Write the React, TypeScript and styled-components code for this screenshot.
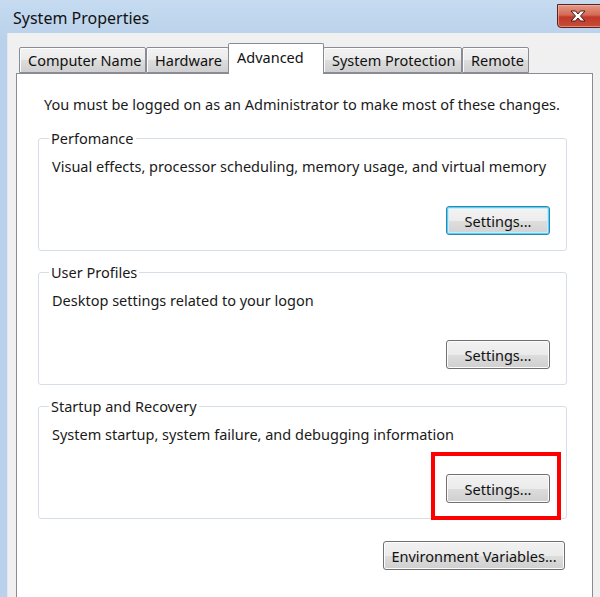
import React from 'react';
import styled, { createGlobalStyle } from 'styled-components';

const Global = createGlobalStyle`
  html, body {
    margin: 0;
    padding: 0;
    background: #b9d1ea;
  }
  body {
    font-family: "Noto Sans", "Open Sans", sans-serif;
    font-size: 14.5px;
    color: #1a1a1a;
  }
`;

const Window = styled.div`
  width: 600px;
  height: 597px;
  overflow: hidden;
  display: flex;
  flex-direction: column;
  background: linear-gradient(180deg, #c6dbf0 0%, #b9d1ea 40px, #b9d1ea 100%);
`;

const TitleBar = styled.div`
  height: 33px;
  flex-shrink: 0;
  display: flex;
  align-items: flex-start;
  justify-content: space-between;
  padding-left: 13px;
`;

const Title = styled.div`
  font-size: 16px;
  line-height: 20px;
  margin-top: 8px;
  color: #111;
`;

const CloseButton = styled.div`
  width: 46px;
  height: 24px;
  margin-top: 4px;
  margin-right: -3px;
  box-sizing: border-box;
  border: 1px solid #5e2020;
  border-radius: 0 0 4px 4px;
  background: linear-gradient(180deg, #e39a87 0%, #d46a55 45%, #c0392b 55%, #c64c35 100%);
  box-shadow: inset 0 0 0 1px rgba(255, 200, 190, 0.5);
  display: flex;
  align-items: center;
  justify-content: center;
  padding-right: 4px;
`;

const Client = styled.div`
  flex: 1;
  margin-left: 7px;
  background: #f0f0f0;
  border-left: 1px solid #dfe8f1;
  padding: 10px 0 0 8px;
  display: flex;
  flex-direction: column;
  min-height: 0;
`;

const TabRow = styled.div`
  display: flex;
  align-items: flex-end;
  padding-left: 3px;
  position: relative;
  z-index: 1;
`;

const Tab = styled.div<{ $w: number; $active?: boolean }>`
  width: ${(p) => p.$w}px;
  box-sizing: border-box;
  height: ${(p) => (p.$active ? 31 : 26)}px;
  margin-bottom: ${(p) => (p.$active ? -1 : 0)}px;
  margin-left: ${(p) => (p.$active ? -1 : 0)}px;
  margin-right: ${(p) => (p.$active ? -1 : 0)}px;
  border: 1px solid #898c95;
  border-bottom: ${(p) => (p.$active ? 'none' : '1px solid #898c95')};
  border-radius: 2px 2px 0 0;
  background: ${(p) =>
    p.$active ? '#ffffff' : 'linear-gradient(180deg, #f2f2f2 0%, #ebebeb 50%, #dddddd 51%, #cfcfcf 100%)'};
  box-shadow: ${(p) => (p.$active ? 'none' : 'inset 0 1px 0 #ffffff, inset 1px 0 0 #fbfbfb')};
  padding-left: 8px;
  line-height: ${(p) => (p.$active ? 26 : 24)}px;
  white-space: nowrap;
  color: #111;
`;

const Panel = styled.div`
  flex: 1;
  width: 577px;
  box-sizing: border-box;
  background: #ffffff;
  border: 1px solid #898c95;
  border-bottom: none;
  padding: 20px 0 0 27px;
  display: flex;
  flex-direction: column;
`;

const Notice = styled.div`
  line-height: 20px;
  white-space: nowrap;
`;

const Group = styled.fieldset`
  margin: 14px 0 0 -6px;
  width: 529px;
  box-sizing: border-box;
  border: 1px solid #d5dfe5;
  border-radius: 3px;
  padding: 8px 16px 15px 13px;
  display: flex;
  flex-direction: column;
  min-width: 0;
  & + & {
    margin-top: 11px;
  }
`;

const Legend = styled.legend`
  padding: 0 2px;
  margin-left: -3px;
  line-height: 20px;
`;

const Description = styled.div`
  line-height: 20px;
  white-space: nowrap;
`;

const ButtonRow = styled.div`
  display: flex;
  justify-content: flex-end;
  margin-top: 30px;
`;

const Button = styled.div<{ $w?: number; $focused?: boolean }>`
  position: relative;
  width: ${(p) => p.$w ?? 104}px;
  height: 29px;
  box-sizing: border-box;
  border: 1px solid ${(p) => (p.$focused ? '#3c7fb1' : '#707070')};
  border-radius: 3px;
  background: ${(p) =>
    p.$focused
      ? 'linear-gradient(180deg, #f4f4f4 0%, #ececec 50%, #dedede 51%, #d2d2d2 100%)'
      : 'linear-gradient(180deg, #f2f2f2 0%, #ebebeb 50%, #dddddd 51%, #cfcfcf 100%)'};
  box-shadow: ${(p) =>
    p.$focused ? 'inset 0 0 0 1px #48d8fb, inset 0 0 0 2px #c8ecfa' : 'inset 0 0 0 1px #fcfcfc'};
  display: flex;
  align-items: center;
  justify-content: center;
  color: #111;
  line-height: 20px;
  white-space: nowrap;
`;

const Highlight = styled.div`
  position: absolute;
  left: -16px;
  top: -23px;
  right: -12px;
  bottom: -18px;
  border: 4px solid #ff0000;
  pointer-events: none;
`;

const FooterRow = styled.div`
  display: flex;
  justify-content: flex-end;
  margin-top: 22px;
  width: 527px;
  margin-left: -6px;
`;

const Close = () => (
  <svg width="20" height="14" viewBox="0 0 20 14">
    <path
      d="M3 2 L7.5 2 L10 5 L12.5 2 L17 2 L12.5 7 L17 12 L12.5 12 L10 9 L7.5 12 L3 12 L7.5 7 Z"
      fill="#ffffff"
      stroke="#4a1a1a"
      strokeWidth="1"
      strokeLinejoin="round"
    />
  </svg>
);

const tabs = [
  { label: 'Computer Name', w: 127 },
  { label: 'Hardware', w: 83 },
  { label: 'Advanced', w: 96, active: true },
  { label: 'System Protection', w: 139 },
  { label: 'Remote', w: 67 },
];

const groups = [
  { title: 'Perfomance', text: 'Visual effects, processor scheduling, memory usage, and virtual memory', focused: true },
  { title: 'User Profiles', text: 'Desktop settings related to your logon' },
  { title: 'Startup and Recovery', text: 'System startup, system failure, and debugging information', marked: true },
];

const App: React.FC = () => {
  return (
    <>
      <Global />
      <Window>
        <TitleBar>
          <Title>System Properties</Title>
          <CloseButton>
            <Close />
          </CloseButton>
        </TitleBar>
        <Client>
          <TabRow>
            {tabs.map((t) => (
              <Tab key={t.label} $w={t.w} $active={t.active}>
                {t.label}
              </Tab>
            ))}
          </TabRow>
          <Panel>
            <Notice>You must be logged on as an Administrator to make most of these changes.</Notice>
            {groups.map((g) => (
              <Group key={g.title}>
                <Legend>{g.title}</Legend>
                <Description>{g.text}</Description>
                <ButtonRow>
                  <Button $focused={g.focused}>
                    Settings...
                    {g.marked && <Highlight />}
                  </Button>
                </ButtonRow>
              </Group>
            ))}
            <FooterRow>
              <Button $w={182}>Environment Variables...</Button>
            </FooterRow>
          </Panel>
        </Client>
      </Window>
    </>
  );
};

export default App;
